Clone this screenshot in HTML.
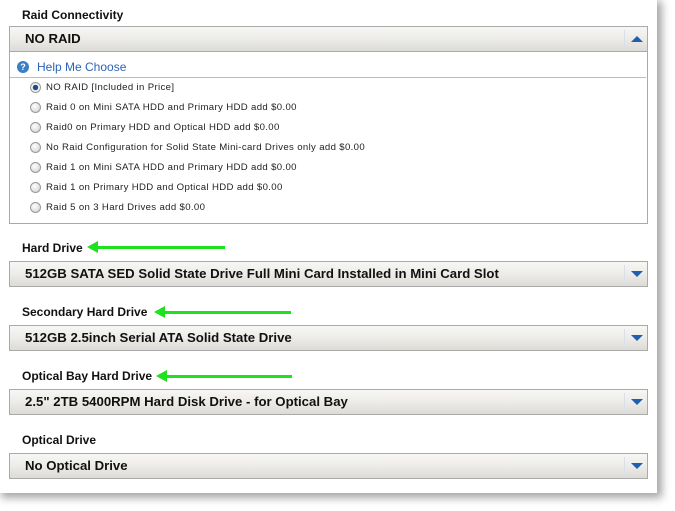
<!DOCTYPE html>
<html><head><style>
body{margin:0;width:675px;height:511px;background:#fff;position:relative;overflow:hidden;font-family:"Liberation Sans",Arial,sans-serif}
.card{position:absolute;left:0;top:0;width:657px;height:493px;background:#fff;box-shadow:3px 3px 8px 2px rgba(0,0,0,.35)}
.lbl{position:absolute;left:22px;font-size:12px;font-weight:bold;color:#111}
.dd{position:absolute;left:9px;width:637px;height:24px;border:1px solid #aaa;background:linear-gradient(#f7f7f5,#ebeae6 55%,#dcdbd6);}
.dd span{position:absolute;left:15px;top:4px;font-size:13.2px;font-weight:bold;color:#111}
.dd i{position:absolute;right:22px;top:3px;height:18px;border-left:1px solid #d8dfe8}
.dd b{position:absolute;right:4px;top:9px;width:0;height:0;border-left:6px solid transparent;border-right:6px solid transparent;border-top:6px solid #1e5fb0}
.dd b.up{border-top:0;border-bottom:6px solid #1e5fb0;top:9px}
.box{position:absolute;left:9px;top:26px;width:637px;height:196px;border:1px solid #aaa}
.r{position:absolute;left:30px;font-size:9.6px;letter-spacing:.35px;color:#222}
.r:before{content:"";position:absolute;left:0;top:0;width:9px;height:9px;border:1px solid #999;border-radius:50%;background:radial-gradient(circle at 40% 35%,#fff,#ccc)}
.r.on:before{background:radial-gradient(circle,#1a4f8a 0 2.5px,#fff 3px,#ccc)}
.r em{font-style:normal;margin-left:16px}
.arrow{position:absolute;height:3px;background:#1de21d}
.arrow:before{content:"";position:absolute;left:-10px;top:-5px;border-top:6.5px solid transparent;border-bottom:6.5px solid transparent;border-right:11px solid #1de21d}
</style></head><body>
<div class="card"></div>
<div class="lbl" style="top:8px">Raid Connectivity</div>
<div class="box"></div>
<div class="dd" style="top:26px"><span>NO RAID</span><i></i><b class="up"></b></div>
<div style="position:absolute;left:10px;top:77px;width:636px;border-top:1px solid #bbb"></div>
<div style="position:absolute;left:17px;top:61px;width:12px;height:12px;border-radius:50%;background:#3a7fc4;color:#fff;font-size:9px;font-weight:bold;text-align:center;line-height:12px">?</div>
<div style="position:absolute;left:37px;top:60px;font-size:12px;color:#2b64b5">Help Me Choose</div>
<div class="r on" style="top:82px"><em>NO RAID [Included in Price]</em></div>
<div class="r" style="top:102px"><em>Raid 0 on Mini SATA HDD and Primary HDD add $0.00</em></div>
<div class="r" style="top:122px"><em>Raid0 on Primary HDD and Optical HDD add $0.00</em></div>
<div class="r" style="top:142px"><em>No Raid Configuration for Solid State Mini-card Drives only add $0.00</em></div>
<div class="r" style="top:162px"><em>Raid 1 on Mini SATA HDD and Primary HDD add $0.00</em></div>
<div class="r" style="top:182px"><em>Raid 1 on Primary HDD and Optical HDD add $0.00</em></div>
<div class="r" style="top:202px"><em>Raid 5 on 3 Hard Drives add $0.00</em></div>

<div class="lbl" style="top:241px">Hard Drive</div>
<div class="arrow" style="left:97px;top:246px;width:128px"></div>
<div class="dd" style="top:261px"><span>512GB SATA SED Solid State Drive Full Mini Card Installed in Mini Card Slot</span><i></i><b></b></div>

<div class="lbl" style="top:305px">Secondary Hard Drive</div>
<div class="arrow" style="left:164px;top:311px;width:127px"></div>
<div class="dd" style="top:325px"><span>512GB 2.5inch Serial ATA Solid State Drive</span><i></i><b></b></div>

<div class="lbl" style="top:369px">Optical Bay Hard Drive</div>
<div class="arrow" style="left:166px;top:375px;width:126px"></div>
<div class="dd" style="top:389px"><span>2.5" 2TB 5400RPM Hard Disk Drive - for Optical Bay</span><i></i><b></b></div>

<div class="lbl" style="top:433px">Optical Drive</div>
<div class="dd" style="top:453px"><span>No Optical Drive</span><i></i><b></b></div>
</body></html>
